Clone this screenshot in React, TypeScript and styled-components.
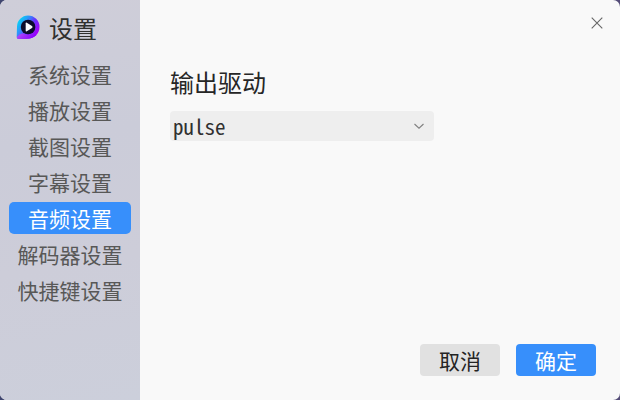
import React from "react";
import styled, { createGlobalStyle } from "styled-components";

const GlobalStyle = createGlobalStyle`
  * { box-sizing: border-box; }
  body {
    margin: 0;
    background: linear-gradient(90deg, #40466f, #544c78);
    font-family: "Noto Sans CJK SC", sans-serif;
  }
`;

const Window = styled.div`
  display: flex;
  width: 620px;
  height: 400px;
  overflow: hidden;
  border-radius: 7px;
  background: #f9f9f9;
`;

const Sidebar = styled.aside`
  flex: none;
  width: 140px;
  height: 100%;
  background: linear-gradient(170deg, #cfced9 0%, #cbccd9 35%, #cdcdd9 65%, #cccfdb 100%);
`;

const Brand = styled.header`
  display: flex;
  align-items: flex-start;
  gap: 8px;
  height: 58px;
  padding: 15px 0 0 16px;
`;

const BrandTitle = styled.h1`
  margin: 0;
  font-size: 24px;
  font-weight: 400;
  line-height: 26px;
  color: #30302f;
`;

const Nav = styled.nav`
  display: flex;
  flex-direction: column;
  gap: 4px;
  padding: 0 9px;
`;

const NavItem = styled.button<{ $active?: boolean }>`
  height: 32px;
  padding: 0;
  border: 0;
  border-radius: 5px;
  background: ${(p) => (p.$active ? "#378ffb" : "transparent")};
  color: ${(p) => (p.$active ? "#fff" : "#585857")};
  font-family: inherit;
  font-size: 21px;
  line-height: 32px;
  text-align: center;
  white-space: nowrap;
`;

const Main = styled.main`
  display: flex;
  flex: 1;
  flex-direction: column;
`;

const TitleBar = styled.div`
  display: flex;
  flex: none;
  justify-content: flex-end;
  height: 46px;
  padding: 17px 17px 0 0;
`;

const CloseButton = styled.button`
  display: flex;
  width: 12px;
  height: 12px;
  padding: 0;
  border: 0;
  background: none;
`;

const Content = styled.section`
  flex: 1;
  padding: 18px 30px 0;
`;

const Label = styled.h2`
  height: 36px;
  margin: 0 0 11px;
  font-size: 24px;
  font-weight: 400;
  line-height: 36px;
  color: #262626;
`;

const Select = styled.button`
  display: flex;
  align-items: center;
  justify-content: space-between;
  width: 264px;
  height: 30px;
  padding: 0 10px 0 3px;
  border: 0;
  border-radius: 4px;
  background: #eeeeee;
  color: #303030;
  font-family: "Noto Sans Mono CJK SC", "Liberation Mono", monospace;
  font-size: 21px;
  line-height: 30px;
`;

const SelectValue = styled.span`
  height: 30px;
  line-height: 30px;
`;

const Footer = styled.footer`
  display: flex;
  justify-content: flex-end;
  gap: 16px;
  padding: 0 24px 24px 0;
`;

const Button = styled.button<{ $primary?: boolean }>`
  width: 80px;
  height: 32px;
  padding: 0;
  border: 0;
  border-radius: 4px;
  background: ${(p) => (p.$primary ? "#378ffb" : "#e1e1e1")};
  color: ${(p) => (p.$primary ? "#fff" : "#242424")};
  font-family: inherit;
  font-size: 21px;
  line-height: 32px;
`;

const Logo = () => (
  <svg width="25" height="25" viewBox="0 0 25 25">
    <defs>
      <linearGradient id="drop" x1="0.1" y1="0.2" x2="0.9" y2="0.75">
        <stop offset="0" stopColor="#08d2f5" />
        <stop offset="0.3" stopColor="#2f91fa" />
        <stop offset="0.58" stopColor="#6535ff" />
        <stop offset="1" stopColor="#a600f8" />
      </linearGradient>
      <linearGradient id="tail" x1="0" y1="0" x2="1" y2="0.3">
        <stop offset="0" stopColor="#b455f6" />
        <stop offset="1" stopColor="#8a00ff" />
      </linearGradient>
    </defs>
    <path d="M12 .4A11.5 11.5 0 0 1 23.5 12C23.5 18.8 18 23.7 11.2 23.8L2.7 24Q.6 24 .7 22L1 11.5A11.2 11.2 0 0 1 12 .4Z" fill="url(#drop)" />
    <path d="M.8 22Q4 18 7 18.5Q12 21 18 18L20.5 20Q17 23.7 11.2 23.8L2.7 24Q.6 24 .8 22Z" fill="url(#tail)" />
    <circle cx="12.1" cy="12" r="7.3" fill="#0b0c2c" />
    <path d="M9.7 8.3Q9.7 7.1 10.8 7.7L16 11.1Q17.2 12 16 12.9L10.8 16.3Q9.7 16.9 9.7 15.7Z" fill="#f8fbff" />
  </svg>
);

const CloseIcon = () => (
  <svg width="12" height="12" viewBox="0 0 12 12" fill="none" stroke="#666" strokeWidth="1.1">
    <path d="M.7 .7 11.3 11.3M11.3 .7 .7 11.3" />
  </svg>
);

const ChevronIcon = () => (
  <svg width="10" height="6" viewBox="0 0 10 6" fill="none" stroke="#808080" strokeWidth="1.1">
    <path d="M.5 1 5 5.2 9.5 1" />
  </svg>
);

const sections = ["系统设置", "播放设置", "截图设置", "字幕设置", "音频设置", "解码器设置", "快捷键设置"];

export default function App() {
  return (
    <>
      <GlobalStyle />
      <Window>
        <Sidebar>
          <Brand>
            <Logo />
            <BrandTitle>设置</BrandTitle>
          </Brand>
          <Nav>
            {sections.map((name) => (
              <NavItem key={name} $active={name === "音频设置"}>
                {name}
              </NavItem>
            ))}
          </Nav>
        </Sidebar>
        <Main>
          <TitleBar>
            <CloseButton aria-label="关闭">
              <CloseIcon />
            </CloseButton>
          </TitleBar>
          <Content>
            <Label>输出驱动</Label>
            <Select>
              <SelectValue>pulse</SelectValue>
              <ChevronIcon />
            </Select>
          </Content>
          <Footer>
            <Button>取消</Button>
            <Button $primary>确定</Button>
          </Footer>
        </Main>
      </Window>
    </>
  );
}
